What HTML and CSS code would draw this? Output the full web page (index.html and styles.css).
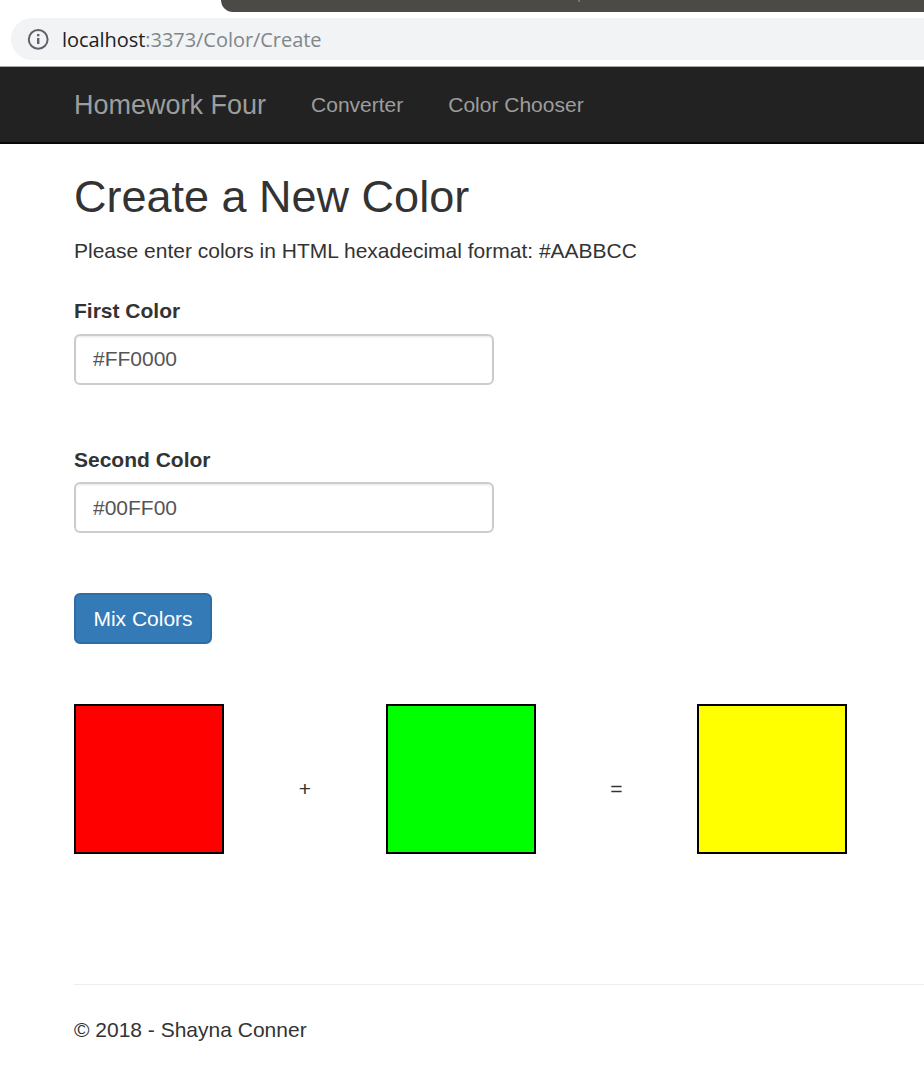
FILE: index.html
```html
<!DOCTYPE html>
<html lang="en">
<head>
<meta charset="utf-8">
<title>Create a New Color</title>
<link rel="stylesheet" href="styles.css">
</head>
<body>
<div class="browser">
  <div class="tabstrip"><span class="tick"></span></div>
  <div class="omnibox">
    <svg class="info" viewBox="0 0 22 22" width="22" height="22">
      <circle cx="11.2" cy="11.4" r="9.4" fill="none" stroke="#5f6368" stroke-width="2"/>
      <path d="M10 6h2.4v2.2h-2.4zM10 10h2.4v6h-2.4z" fill="#5f6368"/>
    </svg>
    <div class="url"><span class="host">localhost</span><span>:3373/Color/Create</span></div>
  </div>
</div>
<nav class="navbar">
  <a class="brand">Homework Four</a>
  <a class="link converter">Converter</a>
  <a class="link chooser">Color Chooser</a>
</nav>
<main class="container">
  <h2>Create a New Color</h2>
  <p class="hint">Please enter colors in HTML hexadecimal format: #AABBCC</p>
  <form>
    <div class="field">
      <label for="first">First Color</label>
      <input id="first" class="control" type="text" value="#FF0000">
    </div>
    <div class="field second">
      <label for="second">Second Color</label>
      <input id="second" class="control" type="text" value="#00FF00">
    </div>
    <button class="btn" type="button">Mix Colors</button>
  </form>
  <div class="mix">
    <div class="swatch red"></div>
    <div class="sign">+</div>
    <div class="swatch green"></div>
    <div class="sign">=</div>
    <div class="swatch yellow"></div>
  </div>
  <footer><p>© 2018 - Shayna Conner</p></footer>
</main>
</body>
</html>
```
FILE: styles.css
```css
* { box-sizing: border-box; }
body {
  margin: 0;
  overflow: hidden;
  background: #fff;
  color: #333;
  font: 21px/30px "Liberation Sans", Arial, sans-serif;
}
.browser {
  height: 67px;
  border-bottom: 1px solid #a8abaa;
}
.tabstrip {
  height: 12px;
  margin-left: 221px;
  background: #4c4a46;
  border-bottom-left-radius: 12px;
}
.tick {
  display: block;
  width: 2px;
  height: 2px;
  margin-left: 357px;
  background: #777571;
}
.omnibox {
  display: flex;
  align-items: center;
  height: 42px;
  margin: 6px 0 0 11px;
  padding-left: 16px;
  background: #f1f3f4;
  border-radius: 21px 0 0 21px;
}
.info { margin-right: 13px; }
.url {
  padding-top: 2px;
  font: 20px/40px "Open Sans", "Noto Sans", sans-serif;
  letter-spacing: -0.05px;
  color: #80868b;
  white-space: nowrap;
}
.host { color: #202124; }
.navbar {
  display: flex;
  align-items: center;
  height: 77px;
  padding-left: 74px;
  background: #222;
  border-bottom: 2px solid #080808;
  color: #9d9d9d;
}
.brand { font-size: 27px; }
.link { margin-left: 45px; }
.container { padding-left: 74px; }
h2 {
  margin: 28px 0 15px;
  font-size: 45px;
  font-weight: 400;
  line-height: 49px;
}
.hint { margin: 0; }
.field {
  display: flex;
  flex-direction: column;
  margin-bottom: 60px;
}
form { padding-top: 30px; }
label {
  margin-bottom: 8px;
  font-weight: 700;
}
.second label { margin-bottom: 7px; }
.control {
  width: 420px;
  height: 51px;
  padding: 7px 17px 9px;
  border: 2px solid #ccc;
  border-radius: 6px;
  box-shadow: inset 0 1.5px 1.5px rgba(0, 0, 0, .075);
  background: #fff;
  color: #555;
  font: inherit;
}
.second .control { padding: 9px 17px; }
.btn {
  display: block;
  width: 138px;
  height: 51px;
  padding: 0;
  border: 2px solid #2e6da4;
  border-radius: 6px;
  background: #337ab7;
  color: #fff;
  font: inherit;
}
.mix {
  display: grid;
  grid-template-columns: 150px 162px 150px 161px 150px;
  margin-top: 60px;
}
.swatch {
  height: 150px;
  border: 2px solid #000;
}
.red { background: #f00; }
.green { background: #0f0; }
.yellow { background: #ff0; }
.sign {
  padding-top: 70px;
  text-align: center;
}
footer {
  margin-top: 130px;
  padding-top: 30px;
  border-top: 1px solid #eee;
}
footer p { margin: 0; }
```
